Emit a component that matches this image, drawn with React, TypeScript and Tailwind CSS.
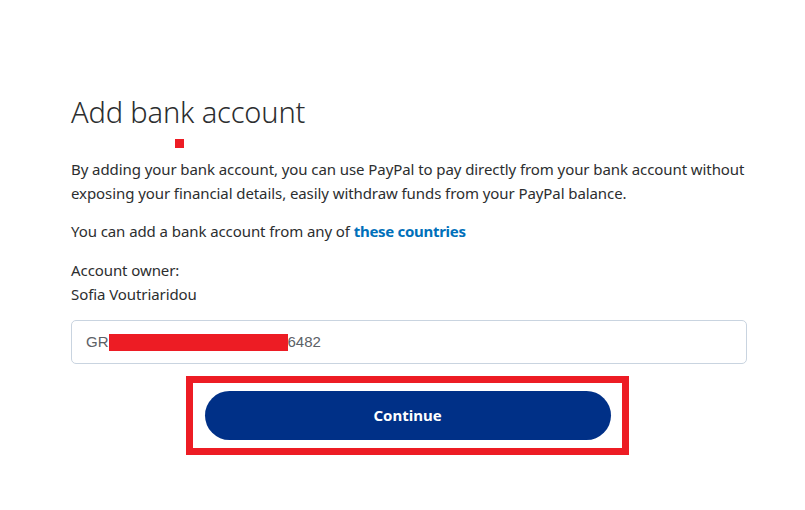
import React from 'react';

export default function App() {
  return (
    <div className="w-[805px] h-[510px] bg-white overflow-hidden" style={{ fontFamily: '"Noto Sans", "Open Sans", sans-serif' }}>
      <div className="relative ml-[71px] w-[676px] pt-[93px]">
        <h1 className="text-[29px] leading-[38px] font-light text-[#2c2e2f] tracking-[-0.15px]">Add bank account</h1>
        <span className="absolute left-[104px] top-[139px] w-[9px] h-[9px] bg-[#ed1c24]" />
        <p className="mt-[26px] text-[15px] leading-[24px] text-[#2c2e2f] tracking-[-0.08px]">
          By adding your bank account, you can use PayPal to pay directly from your bank account without exposing your financial details, easily withdraw funds from your PayPal balance.
        </p>
        <p className="mt-[14px] text-[15px] leading-[24px] text-[#2c2e2f] tracking-[-0.08px]">
          You can add a bank account from any of{' '}
          <a className="font-bold text-[#0070ba] tracking-[-0.3px]">these countries</a>
        </p>
        <div className="mt-[15px] text-[15px] leading-[24px] text-[#2c2e2f] tracking-[-0.08px]">
          <p>Account owner:</p>
          <p>Sofia Voutriaridou</p>
        </div>
        <div className="mt-[14px] h-[44px] rounded-[5px] border border-[#c9d4e0] flex items-center pl-[14px] text-[15px] text-[#5c6166]" style={{ fontFamily: '"Liberation Sans", Arial, sans-serif' }}>
          <span>GR</span>
          <span className="w-[179px] h-[17px] bg-[#ed1c24]" />
          <span>6482</span>
        </div>
        <div className="mt-[12px] ml-[115px] w-[443px] h-[79px] border-[7px] border-[#ed1c24] flex items-center justify-center">
          <button className="w-[406px] h-[49px] rounded-full bg-[#003087] text-white text-[15px] font-bold">
            Continue
          </button>
        </div>
      </div>
    </div>
  );
}
